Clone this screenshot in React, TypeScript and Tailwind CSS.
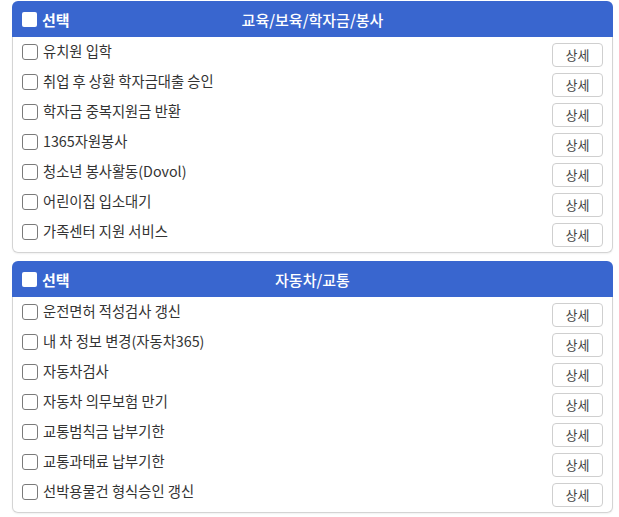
import React from "react";

const groups = [
  {
    title: "교육/보육/학자금/봉사",
    items: [
      "유치원 입학",
      "취업 후 상환 학자금대출 승인",
      "학자금 중복지원금 반환",
      "1365자원봉사",
      "청소년 봉사활동(Dovol)",
      "어린이집 입소대기",
      "가족센터 지원 서비스",
    ],
  },
  {
    title: "자동차/교통",
    items: [
      "운전면허 적성검사 갱신",
      "내 차 정보 변경(자동차365)",
      "자동차검사",
      "자동차 의무보험 만기",
      "교통범칙금 납부기한",
      "교통과태료 납부기한",
      "선박용물건 형식승인 갱신",
    ],
  },
];

function Group({ title, items }: { title: string; items: string[] }) {
  return (
    <div className="flex flex-col w-[601px]">
      <div className="h-[36px] bg-[#3966cf] rounded-t-[6px] grid grid-cols-[1fr_auto_1fr] items-center px-[10px]">
        <div className="flex items-center">
          <div className="w-[15px] h-[15px] bg-white rounded-[2px]" />
          <span className="ml-[5px] text-[15px] font-bold text-white leading-none">선택</span>
        </div>
        <div className="text-[15px] text-white font-medium leading-none">{title}</div>
        <div />
      </div>
      <div className="border-x border-b border-[#d4d4d4] rounded-b-[6px] pt-[3px] pb-[2px] shadow-[0_1px_2px_rgba(0,0,0,0.06)]">
        {items.map((it) => (
          <div key={it} className="h-[30px] flex justify-between pl-[9px] pr-[9px]">
            <div className="flex items-start">
              <div className="mt-[4px] w-[16px] h-[16px] border border-[#7a7a7a] rounded-[3px] bg-white" />
              <span className="ml-[5px] text-[14.3px] leading-[22px] text-[#333]">{it}</span>
            </div>
            <div className="mt-[3px] w-[51px] h-[24px] border border-[#cfcfcf] rounded-[4px] bg-white flex items-center justify-center text-[13px] text-[#444]">
              상세
            </div>
          </div>
        ))}
      </div>
    </div>
  );
}

export default function App() {
  return (
    <div
      className="w-[619px] h-[517px] bg-white pl-[12px] pt-[1px] flex flex-col gap-[8px]"
      style={{ fontFamily: '"Noto Sans CJK KR", "Noto Sans", sans-serif' }}
    >
      {groups.map((g) => (
        <Group key={g.title} title={g.title} items={g.items} />
      ))}
    </div>
  );
}
